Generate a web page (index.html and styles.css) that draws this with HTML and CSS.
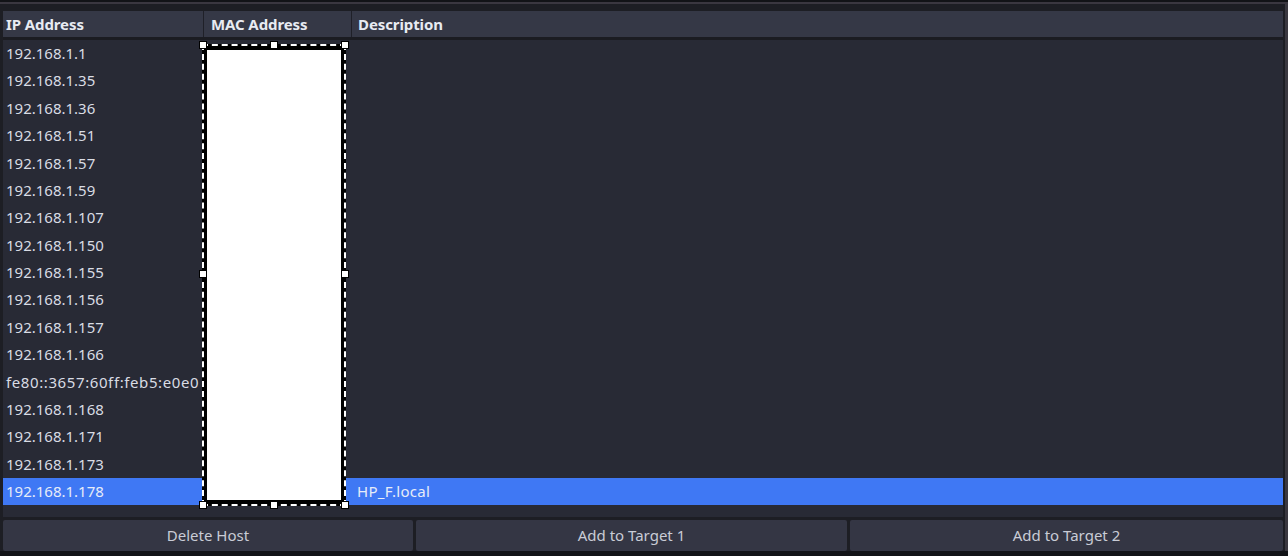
FILE: index.html
```html
<!DOCTYPE html>
<html>
<head>
<meta charset="utf-8">
<link rel="stylesheet" href="styles.css">
</head>
<body>
<div class="app">
  <div class="frame">
    <div class="table">
      <div class="thead">
        <div class="th c1">IP Address</div>
        <div class="th c2">MAC Address</div>
        <div class="th c3">Description</div>
      </div>
      <div class="tbody">
        <div class="tr"><div class="td">192.168.1.1</div><div class="td"></div><div class="td"></div></div>
        <div class="tr"><div class="td">192.168.1.35</div><div class="td"></div><div class="td"></div></div>
        <div class="tr"><div class="td">192.168.1.36</div><div class="td"></div><div class="td"></div></div>
        <div class="tr"><div class="td">192.168.1.51</div><div class="td"></div><div class="td"></div></div>
        <div class="tr"><div class="td">192.168.1.57</div><div class="td"></div><div class="td"></div></div>
        <div class="tr"><div class="td">192.168.1.59</div><div class="td"></div><div class="td"></div></div>
        <div class="tr"><div class="td">192.168.1.107</div><div class="td"></div><div class="td"></div></div>
        <div class="tr"><div class="td">192.168.1.150</div><div class="td"></div><div class="td"></div></div>
        <div class="tr"><div class="td">192.168.1.155</div><div class="td"></div><div class="td"></div></div>
        <div class="tr"><div class="td">192.168.1.156</div><div class="td"></div><div class="td"></div></div>
        <div class="tr"><div class="td">192.168.1.157</div><div class="td"></div><div class="td"></div></div>
        <div class="tr"><div class="td">192.168.1.166</div><div class="td"></div><div class="td"></div></div>
        <div class="tr"><div class="td ipv6">fe80::3657:60ff:feb5:e0e0</div><div class="td"></div><div class="td"></div></div>
        <div class="tr"><div class="td">192.168.1.168</div><div class="td"></div><div class="td"></div></div>
        <div class="tr"><div class="td">192.168.1.171</div><div class="td"></div><div class="td"></div></div>
        <div class="tr"><div class="td">192.168.1.173</div><div class="td"></div><div class="td"></div></div>
        <div class="tr selected"><div class="td">192.168.1.178</div><div class="td"></div><div class="td desc">HP_F.local</div></div>
      </div>
    </div>
    <div class="buttons">
      <div class="btn">Delete Host</div>
      <div class="btn">Add to Target 1</div>
      <div class="btn">Add to Target 2</div>
    </div>
  </div>
  <div class="redact">
    <div class="fill"></div>
    <span class="h h-tl"></span><span class="h h-tc"></span><span class="h h-tr"></span>
    <span class="h h-ml"></span><span class="h h-mr"></span>
    <span class="h h-bl"></span><span class="h h-bc"></span><span class="h h-br"></span>
  </div>
</div>
</body>
</html>
```
FILE: styles.css
```css
html, body {
  margin: 0;
  padding: 0;
  background: #121317;
}
body {
  width: 1288px;
  height: 556px;
  overflow: hidden;
  font-family: "Noto Sans", "DejaVu Sans", sans-serif;
}
.app {
  position: relative;
  width: 1288px;
  height: 556px;
  padding-top: 2px;
  box-sizing: border-box;
  background: #121317;
}
.frame {
  height: 549px;
  box-sizing: border-box;
  border-top: 2px solid #3a3740;
  border-right: 3px solid #3a3840;
  background: #1d1e24;
  padding: 7px 2px 0 3px;
  display: flex;
  flex-direction: column;
}
.table {
  display: flex;
  flex-direction: column;
  height: 506px;
  background: #282a35;
}
.thead {
  display: grid;
  grid-template-columns: 201px 148px 1fr;
  height: 26px;
  background: #353846;
  border-bottom: 3px solid #1b1c22;
}
.th {
  font-size: 15px;
  font-weight: 700;
  color: #e8ebf2;
  line-height: 26px;
  padding-left: 3px;
  border-right: 1px solid #1f2028;
  white-space: nowrap;
  overflow: hidden;
  letter-spacing: -0.1px;
}
.th.c2 { padding-left: 7px; }
.th.c3 { padding-left: 6px; border-right: none; }
.tbody {
  display: flex;
  flex-direction: column;
}
.tr {
  display: grid;
  grid-template-columns: 201px 148px 1fr;
  height: 27.375px;
}
.td {
  font-size: 15px;
  color: #d9dce4;
  line-height: 26px;
  padding-left: 3px;
  white-space: nowrap;
  overflow: hidden;
}
.td.ipv6 {
  letter-spacing: 0.6px;
}
.tr.selected {
  background: #3f78f4;
}
.tr.selected .td {
  color: #e6ecf8;
}
.td.desc {
  padding-left: 5px;
  letter-spacing: 0.3px;
}
.buttons {
  display: grid;
  grid-template-columns: 410px 431px 1fr;
  gap: 3px;
  margin-top: 3px;
  height: 31px;
}
.btn {
  background: #343644;
  border-radius: 2px;
  color: #c9ccd6;
  font-size: 15px;
  line-height: 31px;
  text-align: center;
}
.redact {
  position: absolute;
  left: 202px;
  top: 44px;
  width: 144px;
  height: 462px;
  box-sizing: border-box;
  border: 2px dashed #ffffff;
  background: #000000;
  padding: 4px 3px;
}
.fill {
  width: 100%;
  height: 100%;
  background: #ffffff;
}
.h {
  position: absolute;
  width: 6px;
  height: 6px;
  background: #ffffff;
  border: 1px solid #000000;
}
.h-tl { left: -5px; top: -5px; }
.h-tc { left: 66px; top: -5px; }
.h-tr { right: -5px; top: -5px; }
.h-ml { left: -5px; top: 224px; }
.h-mr { right: -5px; top: 224px; }
.h-bl { left: -5px; bottom: -5px; }
.h-bc { left: 66px; bottom: -5px; }
.h-br { right: -5px; bottom: -5px; }
```
